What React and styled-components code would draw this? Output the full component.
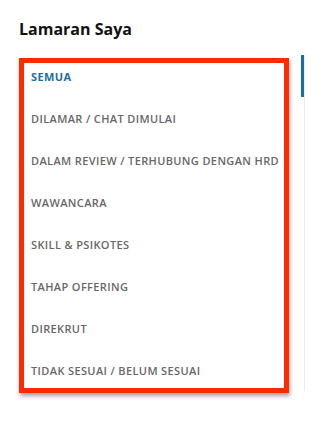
import React from "react";
import styled, { createGlobalStyle } from "styled-components";

const Global = createGlobalStyle`
  html, body { margin: 0; padding: 0; background: #fff; }
  body { font-family: "Open Sans", "Noto Sans", sans-serif; }
`;

const Page = styled.div`
  width: 327px;
  height: 438px;
  box-sizing: border-box;
  padding: 18px 0 0 19px;
  display: flex;
  flex-direction: column;
  gap: 15px;
`;

const Title = styled.h2`
  margin: 0;
  font-size: 16px;
  line-height: 22px;
  font-weight: 700;
  color: #111;
`;

const TabArea = styled.div`
  position: relative;
  width: 286px;
`;

const TabList = styled.ul`
  list-style: none;
  margin: 0;
  padding: 0;
  border-right: 1px solid #ececec;
  display: flex;
  flex-direction: column;
`;

const Tab = styled.li`
  position: relative;
  height: 42px;
  display: flex;
  align-items: center;
  padding-left: 12px;
  font-size: 11px;
  letter-spacing: 0.37px;
  text-transform: uppercase;
  font-weight: ${(p) => (p.$active ? 700 : 600)};
  color: ${(p) => (p.$active ? "#1a6fa5" : "#686868")};
  white-space: nowrap;

  &::after {
    content: "";
    position: absolute;
    top: 0;
    right: 0;
    width: 3px;
    height: 100%;
    background: ${(p) => (p.$active ? "#1a6fa5" : "transparent")};
  }
`;

const Highlight = styled.div`
  position: absolute;
  left: 0;
  top: 3px;
  width: 270px;
  height: 335px;
  box-sizing: border-box;
  border: 5px solid #ff2a00;
  box-shadow: 1px 3px 4px rgba(0, 0, 0, 0.35);
  pointer-events: none;
`;

const tabs = [
  "Semua",
  "Dilamar / Chat Dimulai",
  "Dalam Review / Terhubung dengan HRD",
  "Wawancara",
  "Skill & Psikotes",
  "Tahap Offering",
  "Direkrut",
  "Tidak Sesuai / Belum Sesuai",
];

export default function App() {
  return (
    <>
      <Global />
      <Page>
        <Title>Lamaran Saya</Title>
        <TabArea>
          <TabList>
            {tabs.map((t, i) => (
              <Tab key={t} $active={i === 0}>
                {t}
              </Tab>
            ))}
          </TabList>
          <Highlight />
        </TabArea>
      </Page>
    </>
  );
}
